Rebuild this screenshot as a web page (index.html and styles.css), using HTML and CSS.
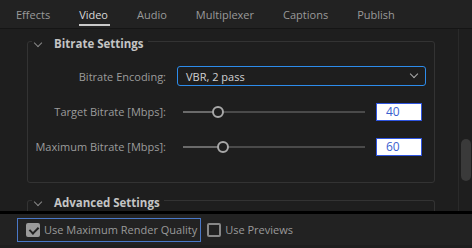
FILE: index.html
```html
<!DOCTYPE html>
<html lang="en">
<head>
  <meta charset="UTF-8" />
  <title>Export Settings</title>
  <link rel="stylesheet" href="styles.css">
</head>
<body>

  <nav class="tabs">
    <a href="#">Effects</a>
    <a href="#" class="active">Video</a>
    <a href="#">Audio</a>
    <a href="#">Multiplexer</a>
    <a href="#">Captions</a>
    <a href="#">Publish</a>
  </nav>

  <div class="scroll-area">
    <div class="content">

      <fieldset class="section">
        <legend><span class="twisty"></span>Bitrate Settings</legend>

        <div class="rows">
          <label class="row-label">Bitrate Encoding:</label>
          <div class="select">
            <span>VBR, 2 pass</span>
            <span class="select-arrow"></span>
          </div>

          <label class="row-label">Target Bitrate [Mbps]:</label>
          <div class="slider-row">
            <div class="slider">
              <div class="slider-fill" style="width: 19%"></div>
              <div class="slider-thumb" style="left: 19%"></div>
            </div>
            <input class="num-input" type="text" value="40">
          </div>

          <label class="row-label">Maximum Bitrate [Mbps]:</label>
          <div class="slider-row">
            <div class="slider">
              <div class="slider-fill" style="width: 22%"></div>
              <div class="slider-thumb" style="left: 22%"></div>
            </div>
            <input class="num-input" type="text" value="60">
          </div>
        </div>
      </fieldset>

      <fieldset class="section section-open">
        <legend><span class="twisty"></span>Advanced Settings</legend>
      </fieldset>

    </div>

    <div class="scrollbar">
      <div class="scroll-thumb"></div>
    </div>
  </div>

  <footer class="bottom-bar">
    <label class="check focused">
      <span class="box checked"></span>Use Maximum Render Quality
    </label>
    <label class="check">
      <span class="box"></span>Use Previews
    </label>
  </footer>

</body>
</html>
```

FILE: styles.css
```css
* {
  margin: 0;
  padding: 0;
  box-sizing: border-box;
}

body {
  width: 472px;
  height: 248px;
  overflow: hidden;
  background-color: #1e1e1e;
  font-family: "Open Sans", sans-serif;
  font-size: 11px;
  color: #a0a0a0;
}

/* TABS */
.tabs {
  height: 29px;
  display: flex;
  gap: 29px;
  padding: 2px 0 0 16px;
  background-color: #222;
  border-bottom: 1px solid #151515;
}

.tabs a {
  position: relative;
  line-height: 26px;
  color: #9a9a9a;
  text-decoration: none;
}

.tabs a.active {
  color: #d8d8d8;
}

.tabs a.active::after {
  content: "";
  position: absolute;
  left: 0;
  right: -2px;
  bottom: 2px;
  height: 2px;
  background-color: #c8c8c8;
}

/* SCROLL AREA */
.scroll-area {
  height: 185px;
  display: flex;
  border-bottom: 3px solid #000;
}

.content {
  flex: 1;
  padding: 2px 23px 0 27px;
  overflow: hidden;
}

.section {
  border: 1px solid #333;
  border-radius: 3px;
  padding: 0 8px 26px 0;
}

.section legend {
  margin-left: 4px;
  padding: 4px 4px 0 0;
  line-height: 17px;
  font-weight: bold;
  font-size: 11.5px;
  color: #c4c4c4;
}

.twisty {
  display: inline-block;
  width: 6px;
  height: 6px;
  margin: 0 13px 3px 3px;
  border-right: 1px solid #888;
  border-bottom: 1px solid #888;
  transform: rotate(45deg);
  vertical-align: middle;
}

.section-open {
  margin-top: 7px;
  height: 60px;
  border-bottom: none;
}

.rows {
  display: grid;
  grid-template-columns: 138px 1fr;
  column-gap: 11px;
  row-gap: 16px;
  align-items: center;
  margin-top: 14px;
}

.row-label {
  text-align: right;
  color: #9c9c9c;
}

.select {
  height: 20px;
  display: flex;
  align-items: center;
  justify-content: space-between;
  padding: 0 8px 0 8px;
  border: 1px solid #2d8ceb;
  border-radius: 3px;
  color: #d2d2d2;
}

.select-arrow {
  width: 6px;
  height: 6px;
  margin-bottom: 4px;
  border-right: 1px solid #aaa;
  border-bottom: 1px solid #aaa;
  transform: rotate(45deg);
}

.slider-row {
  display: flex;
  align-items: center;
  gap: 11px;
  height: 19px;
}

.slider {
  position: relative;
  width: 182px;
  margin-left: 6px;
  height: 2px;
  background-color: #4a4a4a;
}

.slider-fill {
  height: 2px;
  background-color: #6a6a6a;
}

.slider-thumb {
  position: absolute;
  top: -5px;
  width: 12px;
  height: 12px;
  margin-left: -6px;
  border: 2px solid #a8a8a8;
  border-radius: 50%;
  background-color: #1e1e1e;
}

.num-input {
  width: 46px;
  height: 18px;
  padding-left: 9px;
  border: 1px solid #2f55e0;
  background-color: #fff;
  color: #3a5fd0;
  font-family: inherit;
  font-size: 12px;
}

/* SCROLLBAR */
.scrollbar {
  width: 14px;
  border-left: 1px solid #2a2a2a;
  padding: 110px 1px 0 2px;
}

.scroll-thumb {
  width: 10px;
  height: 42px;
  border-radius: 5px;
  background-color: #3a3a3a;
}

/* BOTTOM BAR */
.bottom-bar {
  height: 31px;
  display: flex;
  align-items: center;
  gap: 5px;
  padding-left: 17px;
  background-color: #222;
}

.check {
  display: flex;
  align-items: center;
  gap: 4px;
  height: 24px;
  color: #9a9a9a;
  border: 1px solid transparent;
}

.check.focused {
  padding: 0 3px 0 8px;
  border-color: #4a78c8;
}

.box {
  width: 14px;
  height: 14px;
  border: 2px solid #888;
  border-radius: 2px;
}

.box.checked {
  position: relative;
  background-color: #9a9a9a;
  border-color: #9a9a9a;
}

.box.checked::after {
  content: "";
  position: absolute;
  left: 3px;
  top: 0;
  width: 4px;
  height: 7px;
  border-right: 2px solid #222;
  border-bottom: 2px solid #222;
  transform: rotate(45deg);
}
```
